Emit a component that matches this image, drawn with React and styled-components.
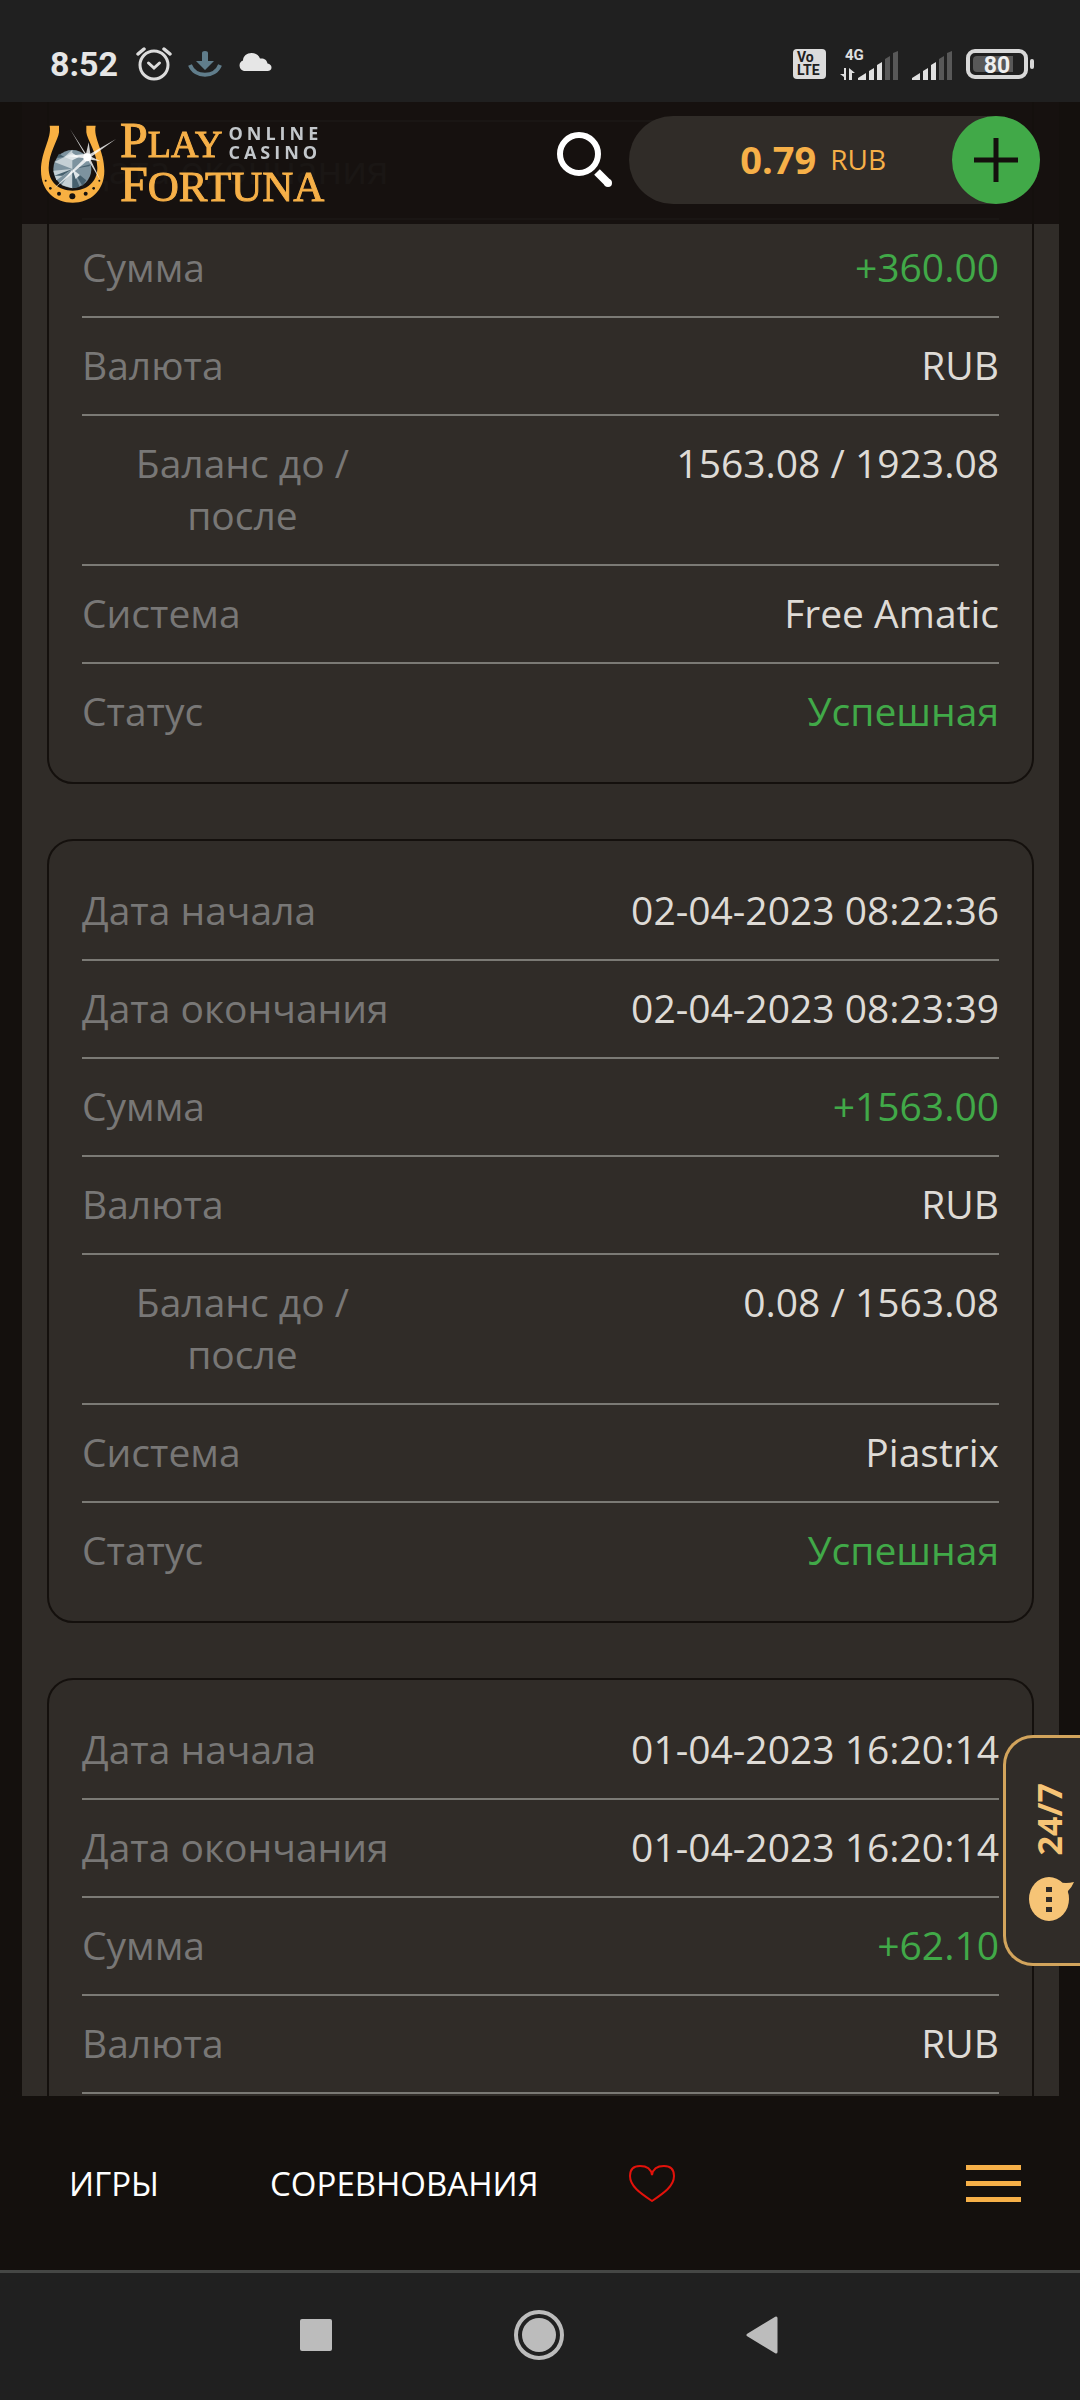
import { useLayoutEffect, useRef } from 'react'
import styled, { createGlobalStyle, ThemeProvider } from 'styled-components'

const theme = {
  page: '#14100d',
  panel: '#302c28',
  system: '#202020',
  gold: '#f6b048',
  green: '#41a948',
  muted: '#787776',
  light: '#dedbd6',
  line: '#7b7a75',
}

const HEADER_HEIGHT = 122

const GlobalStyle = createGlobalStyle`
  * {
    box-sizing: border-box;
  }

  body {
    margin: 0;
    background: #14100d;
    font-family: 'Open Sans', 'Noto Sans', sans-serif;
  }

  button {
    padding: 0;
    border: 0;
    background: none;
    font: inherit;
    color: inherit;
    cursor: pointer;
  }

  svg {
    display: block;
  }
`

const Screen = styled.div`
  position: relative;
  display: flex;
  flex-direction: column;
  height: 100vh;
  overflow: hidden;
`

/* status bar */

const StatusBar = styled.div`
  display: flex;
  flex: none;
  align-items: center;
  justify-content: space-between;
  height: 102px;
  padding: 26px 44px 0 50px;
  background: ${props => props.theme.system};
  color: #e6e6e6;
  font-family: Roboto, sans-serif;
`

const StatusGroup = styled.div`
  display: flex;
  align-items: center;
  gap: ${props => props.$gap}px;
`

const Clock = styled.span`
  min-width: 70px;
  font-size: 34px;
  font-weight: 700;
  line-height: 40px;
`

/* header */

const Scroller = styled.main`
  flex: 1;
  min-height: 0;
  overflow-y: auto;
  scrollbar-width: none;
`

const Header = styled.header`
  position: sticky;
  top: 0;
  z-index: 1;
  display: flex;
  align-items: center;
  height: ${HEADER_HEIGHT}px;
  margin-bottom: -${HEADER_HEIGHT}px;
  padding: 0 40px 6px;
  background: rgba(20, 16, 14, 0.94);
`

const Logo = styled.a`
  display: flex;
  align-items: center;
  gap: 3px;
  padding-top: 8px;
  color: ${props => props.theme.gold};
  text-decoration: none;
`

const LogoText = styled.span`
  display: flex;
  flex-direction: column;
`

const LogoLine = styled.span`
  display: flex;
  align-items: center;
  gap: 6px;
  height: 43px;
`

const LogoWord = styled.span`
  font-family: 'Liberation Serif', serif;
  font-size: ${props => props.$size}px;
  line-height: 43px;
  -webkit-text-stroke: 1px ${props => props.theme.gold};

  &::first-letter {
    font-size: 50px;
  }
`

const LogoTag = styled.span`
  color: #c3c7cb;
  font-size: 18px;
  font-weight: 700;
  letter-spacing: 4px;
  line-height: 19px;
`

const SearchButton = styled.button`
  margin-left: auto;
`

const Balance = styled.div`
  display: flex;
  align-items: center;
  justify-content: flex-end;
  width: 411px;
  height: 88px;
  margin-left: 16px;
  border-radius: 44px;
  background: ${props => props.theme.panel};
  color: ${props => props.theme.gold};
`

const Amount = styled.span`
  padding-bottom: 2px;
  font-size: 38px;
  font-weight: 700;
  line-height: 52px;
`

const Currency = styled.span`
  margin: 0 66px 0 14px;
  padding-bottom: 2px;
  font-size: 28px;
  line-height: 52px;
`

const AddButton = styled.button`
  display: flex;
  align-items: center;
  justify-content: center;
  width: 88px;
  height: 88px;
  border-radius: 50%;
  background: ${props => props.theme.green};
`

/* transactions */

const List = styled.section`
  display: flex;
  flex-direction: column;
  gap: 55px;
  margin: 0 21px 0 22px;
  padding: 0 25px 55px;
  background: ${props => props.theme.panel};
`

const Card = styled.dl`
  margin: 0;
  padding: 22px 33px;
  border: 2px solid ${props => props.theme.page};
  border-radius: 26px;
`

const Row = styled.div`
  display: flex;
  justify-content: space-between;
  padding: 21px 0 23px;
  font-size: 39px;
  line-height: 52px;

  & + & {
    border-top: 2px solid ${props => props.theme.line};
  }
`

const Label = styled.dt`
  width: 35%;
  color: ${props => props.theme.muted};

  ${props => props.$center && `
    text-align: center;
  `}
`

const Value = styled.dd`
  margin: 0;
  color: ${props => props.$green ? props.theme.green : props.theme.light};
  text-align: right;
`

/* support tab */

const SupportTab = styled.button`
  position: absolute;
  right: 0;
  bottom: 434px;
  z-index: 2;
  display: flex;
  flex-direction: column;
  align-items: flex-start;
  justify-content: center;
  gap: 20px;
  width: 77px;
  height: 231px;
  padding: 4px 0 0 23px;
  border: 3px solid #d2a45c;
  border-right: 0;
  border-radius: 30px 0 0 30px;
  background: ${props => props.theme.panel};
  color: #f6c476;
`

const SupportText = styled.span`
  font-size: 34px;
  font-weight: 700;
  line-height: 40px;
  writing-mode: vertical-rl;
  transform: rotate(180deg);
`

/* bottom menu */

const BottomMenu = styled.nav`
  display: flex;
  flex: none;
  align-items: center;
  height: 174px;
  padding: 0 59px 0 69px;
  background: ${props => props.theme.page};
`

const MenuLink = styled.a`
  padding-top: 2px;
  color: #fff;
  font-size: 33px;
  line-height: 46px;
  text-decoration: none;

  & + & {
    margin-left: 111px;
  }
`

const FavouriteButton = styled.button`
  margin-left: 89px;
`

const Burger = styled.button`
  display: flex;
  flex-direction: column;
  gap: 11px;
  width: 55px;
  margin-left: auto;
`

const BurgerLine = styled.span`
  height: 5px;
  width: 100%;
  background: ${props => props.theme.gold};
`

const SystemNav = styled.div`
  display: flex;
  flex: none;
  align-items: center;
  justify-content: center;
  gap: 182px;
  height: 130px;
  padding-right: 2px;
  padding-bottom: 3px;
  border-top: 3px solid #454745;
  background: ${props => props.theme.system};
`

function AlarmIcon() {
  return (
    <svg width="36" height="36" viewBox="0 0 36 36" fill="none" stroke="#dcdcdc" strokeLinecap="round">
      <circle cx="18" cy="19" r="14" strokeWidth="3" />
      <path d="M12.500 17l5.500 5 5.500-5" strokeWidth="3" />
      <path d="M2 8l6-5M34 8l-6-5" strokeWidth="3.500" />
    </svg>
  )
}

function DownloadIcon() {
  return (
    <svg width="34" height="28" viewBox="0 0 34 28">
      <path d="M14 3q0-2 3-2t3 2v8h6l-9 9-9-9h6z" fill="#607d8b" />
      <path d="M2 15c5 13 25 13 30 0" fill="none" stroke="#607d8b" strokeWidth="4" />
    </svg>
  )
}

function CloudIcon() {
  return (
    <svg width="34" height="28" viewBox="0 0 34 28" fill="#e6e6e6">
      <path d="M6 21a5.500 5.500 0 0 1-1-10.500C5 6 9 3 13.500 3c4 0 7 2 8.500 5.500 4-.5 7 1.500 7.500 5 2.500.5 4 2 4 4s-1.500 3.500-4 3.500z" />
    </svg>
  )
}

function VolteIcon() {
  return (
    <svg width="33" height="30" viewBox="0 0 33 30" fontFamily="Roboto, sans-serif" fontWeight="700" fill="#202020">
      <rect width="33" height="30" rx="4" fill="#dcdcdc" />
      <text x="4" y="13" fontSize="14">Vo</text>
      <text x="4" y="26" fontSize="14">LTE</text>
    </svg>
  )
}

function SignalIcon({ network }) {
  return (
    <svg width={network ? 58 : 40} height="34" viewBox={network ? '-18 -4 58 34' : '0 -4 40 34'} fill="#e0e0e0">
      {network && (
        <>
          <text x="-13" y="9" fontSize="15" fontWeight="700" fontFamily="Roboto, sans-serif">{network}</text>
          <path d="M-14 17h2v12h-2v-3l-4-3h4zM-9 17l6 5h-3v7h-3z" />
        </>
      )}
      <path d="M0 29v-2l8-5v7zM11 29v-9l5-3v12zM19 29v-15l5-3v18z" />
      <path d="M27 29v-21l5-3v24zM35 29V2l5-2v29z" fill="#585858" />
    </svg>
  )
}

function BatteryIcon() {
  return (
    <svg width="70" height="30" viewBox="0 0 70 30">
      <rect x="2" y="2" width="58" height="26" rx="7" fill="none" stroke="#d8d8d8" strokeWidth="4" />
      <path d="M11 7h36v16h-36q-4 0-4-4v-8q0-4 4-4z" fill="#585858" />
      <rect x="64" y="10" width="4" height="10" rx="2" fill="#d8d8d8" />
      <text x="31" y="24" textAnchor="middle" fontSize="23" fontWeight="700" fontFamily="Roboto, sans-serif" fill="#f0f0f0">80</text>
    </svg>
  )
}

function LogoMark() {
  return (
    <svg width="77" height="80" viewBox="120 310 231 240">
      <path
        fill="#f8b042"
        d="M149 315C156 352 123 390 123 450c0 60 42 96 95 96s95-36 95-96c0-60-34-98-26-135h-28v20c2 22 33 62 33 107 0 42-32 68-74 68s-72-26-72-68c0-45 29-85 31-107v-20z"
      />
      <g fill="#161210">
        <circle cx="217" cy="527" r="9" />
        <circle cx="177" cy="519" r="6" />
        <circle cx="257" cy="519" r="6" />
        <circle cx="151" cy="503" r="4" />
        <circle cx="281" cy="503" r="4" />
        <circle cx="137" cy="480" r="3" />
        <circle cx="298" cy="480" r="3" />
      </g>
      <circle cx="217" cy="445" r="57" fill="#7d939f" />
      <path fill="#c5d0d5" d="M217 387l-24 22 24 36zM163 424l30-15 24 36zM160 450l57-5-48 34zM185 493l32-48 0 58z" />
      <path fill="#46606e" d="M170 412l23-3-16-10zM217 445l30 50 12-16zM163 465l54-20-30 20zM217 503l0-58 22 54zM275 430l-58 15 50-8z" />
      <path fill="#dfe6e9" d="M193 409l24-12 20 12-20 10zM240 463l-23-18 10 30z" />
      <path fill="#fff" opacity="0.8" d="M210 325l48 74 8-34 5 34 77-44-74 53 28 14-30-5 30 63-38-62-104 88 94-93-52-7 52-6z" />
      <circle cx="262" cy="410" r="12" fill="#fff" />
    </svg>
  )
}

function SearchIcon() {
  return (
    <svg width="56" height="56" viewBox="0 0 56 56" fill="none" stroke="#fff">
      <circle cx="22" cy="22" r="19" strokeWidth="6" />
      <path d="M40 40l11 11" strokeWidth="8" />
      <path d="M51 51h.01" strokeWidth="8" strokeLinecap="round" />
    </svg>
  )
}

function PlusIcon() {
  return (
    <svg width="44" height="44" viewBox="0 0 44 44">
      <path d="M22 0v44M0 22h44" stroke="#14100d" strokeWidth="5" />
    </svg>
  )
}

function ChatIcon() {
  return (
    <svg width="46" height="46" viewBox="0 0 46 46">
      <ellipse cx="20" cy="23" rx="20" ry="22" fill="#f6c476" />
      <path d="M29 6q8 2 16 0-2 5-6 9l-2 6z" fill="#f6c476" />
      <path d="M17 11h6v5h-6zM17 21h6v5h-6zM17 31h6v5h-6z" fill="#302c28" />
    </svg>
  )
}

function HeartIcon() {
  return (
    <svg width="48" height="38" viewBox="0 0 48 38" fill="none" stroke="#e3120b" strokeWidth="2">
      <path d="M24 11C23 4 18 2 12 2 5 2 2 5 2 12c0 10 10 17 22 25 12-8 22-15 22-25 0-7-3-10-10-10-6 0-11 2-12 9z" />
    </svg>
  )
}

const operations = [
  {
    id: 1,
    start: '02-04-2023 08:25:10',
    end: '02-04-2023 08:25:10',
    sum: '+360.00',
    balance: '1563.08 / 1923.08',
    system: 'Free Amatic',
  },
  {
    id: 2,
    start: '02-04-2023 08:22:36',
    end: '02-04-2023 08:23:39',
    sum: '+1563.00',
    balance: '0.08 / 1563.08',
    system: 'Piastrix',
  },
  {
    id: 3,
    start: '01-04-2023 16:20:14',
    end: '01-04-2023 16:20:14',
    sum: '+62.10',
    balance: '0.08 / 62.18',
    system: 'Free Amatic',
  },
]

function Operation({ item }) {
  return (
    <Card>
      <Row><Label>Дата начала</Label><Value>{item.start}</Value></Row>
      <Row><Label>Дата окончания</Label><Value>{item.end}</Value></Row>
      <Row><Label>Сумма</Label><Value $green>{item.sum}</Value></Row>
      <Row><Label>Валюта</Label><Value>RUB</Value></Row>
      <Row><Label $center>Баланс до / после</Label><Value>{item.balance}</Value></Row>
      <Row><Label>Система</Label><Value>{item.system}</Value></Row>
      <Row><Label>Статус</Label><Value $green>Успешная</Value></Row>
    </Card>
  )
}

export default function App() {
  const scroller = useRef(null)

  // open with the first operation slightly scrolled under the header
  useLayoutEffect(() => {
    scroller.current.scrollTop = 102
  }, [])

  return (
    <ThemeProvider theme={theme}>
      <GlobalStyle />
      <Screen>
        <StatusBar>
          <StatusGroup $gap={16}>
            <Clock>8:52</Clock>
            <AlarmIcon />
            <DownloadIcon />
            <CloudIcon />
          </StatusGroup>
          <StatusGroup $gap={14}>
            <VolteIcon />
            <SignalIcon network="4G" />
            <SignalIcon />
            <BatteryIcon />
          </StatusGroup>
        </StatusBar>

        <Scroller ref={scroller}>
          <Header>
            <Logo href="#" aria-label="Play Fortuna">
              <LogoMark />
              <LogoText>
                <LogoLine>
                  <LogoWord $size={38}>PLAY</LogoWord>
                  <LogoTag>ONLINE<br />CASINO</LogoTag>
                </LogoLine>
                <LogoLine>
                  <LogoWord $size={43}>FORTUNA</LogoWord>
                </LogoLine>
              </LogoText>
            </Logo>
            <SearchButton aria-label="Поиск"><SearchIcon /></SearchButton>
            <Balance>
              <Amount>0.79</Amount>
              <Currency>RUB</Currency>
              <AddButton aria-label="Пополнить"><PlusIcon /></AddButton>
            </Balance>
          </Header>
          <List>
            {operations.map(item => <Operation key={item.id} item={item} />)}
          </List>
        </Scroller>

        <BottomMenu>
          <MenuLink href="#games">ИГРЫ</MenuLink>
          <MenuLink href="#tournaments">СОРЕВНОВАНИЯ</MenuLink>
          <FavouriteButton aria-label="Избранное"><HeartIcon /></FavouriteButton>
          <Burger aria-label="Меню">
            <BurgerLine />
            <BurgerLine />
            <BurgerLine />
          </Burger>
        </BottomMenu>

        <SystemNav>
          <button aria-label="Недавние">
            <svg width="32" height="32"><rect width="32" height="32" rx="2" fill="#bcbcbc" /></svg>
          </button>
          <button aria-label="Домой">
            <svg width="50" height="50">
              <circle cx="25" cy="25" r="23" fill="none" stroke="#bcbcbc" strokeWidth="4" />
              <circle cx="25" cy="25" r="17" fill="#bcbcbc" />
            </svg>
          </button>
          <button aria-label="Назад">
            <svg width="32" height="38">
              <path d="M2 19L30 2v34z" fill="#bcbcbc" stroke="#bcbcbc" strokeWidth="3" strokeLinejoin="round" />
            </svg>
          </button>
        </SystemNav>

        <SupportTab>
          <SupportText>24/7</SupportText>
          <ChatIcon />
        </SupportTab>
      </Screen>
    </ThemeProvider>
  )
}
